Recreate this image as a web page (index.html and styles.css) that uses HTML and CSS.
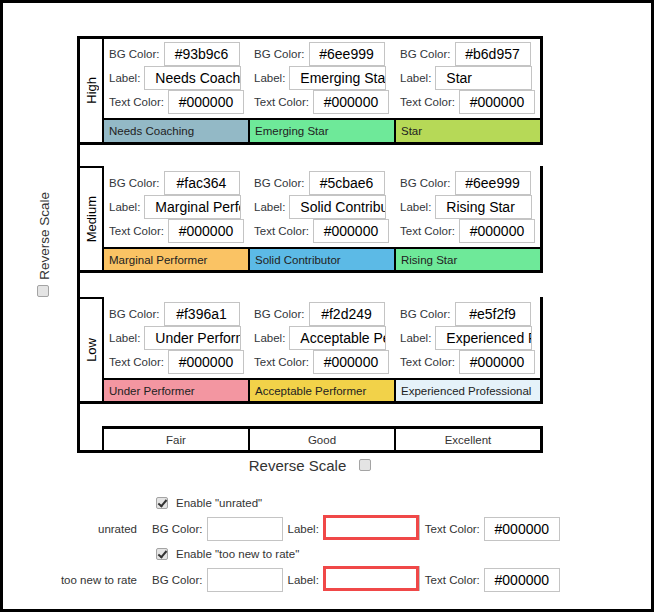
FILE: index.html
```html
<!DOCTYPE html>
<html lang="en">
<head>
  <meta charset="UTF-8">
  <meta name="viewport" content="width=device-width, initial-scale=1.0">
  <title>Rating Scale</title>
  <link rel="stylesheet" href="styles.css">
</head>
<body>
<div class="frame">
  <div class="board">
    <div class="side">
      <span class="side-label">Reverse Scale</span>
      <input type="checkbox" class="check">
    </div>

    <div class="matrix">
      <!-- High -->
      <div class="level">
        <div class="level-name"><span>High</span></div>
        <div class="level-body">
          <div class="cells">
            <div class="cell">
              <div class="field"><label>BG Color:</label><input class="txt color-input" value="#93b9c6"></div>
              <div class="field"><label>Label:</label><input class="txt label-input" value="Needs Coaching"></div>
              <div class="field"><label>Text Color:</label><input class="txt color-input" value="#000000"></div>
            </div>
            <div class="cell">
              <div class="field"><label>BG Color:</label><input class="txt color-input" value="#6ee999"></div>
              <div class="field"><label>Label:</label><input class="txt label-input" value="Emerging Star"></div>
              <div class="field"><label>Text Color:</label><input class="txt color-input" value="#000000"></div>
            </div>
            <div class="cell">
              <div class="field"><label>BG Color:</label><input class="txt color-input" value="#b6d957"></div>
              <div class="field"><label>Label:</label><input class="txt label-input" value="Star"></div>
              <div class="field"><label>Text Color:</label><input class="txt color-input" value="#000000"></div>
            </div>
          </div>
          <div class="bars bars-tall">
            <div class="bar bg-coaching">Needs Coaching</div>
            <div class="bar bg-emerging">Emerging Star</div>
            <div class="bar bg-star">Star</div>
          </div>
        </div>
      </div>

      <div class="gap-a"></div>

      <!-- Medium -->
      <div class="level level-next">
        <div class="level-name"><span>Medium</span></div>
        <div class="level-body">
          <div class="cells">
            <div class="cell">
              <div class="field"><label>BG Color:</label><input class="txt color-input" value="#fac364"></div>
              <div class="field"><label>Label:</label><input class="txt label-input" value="Marginal Performer"></div>
              <div class="field"><label>Text Color:</label><input class="txt color-input" value="#000000"></div>
            </div>
            <div class="cell">
              <div class="field"><label>BG Color:</label><input class="txt color-input" value="#5cbae6"></div>
              <div class="field"><label>Label:</label><input class="txt label-input" value="Solid Contributor"></div>
              <div class="field"><label>Text Color:</label><input class="txt color-input" value="#000000"></div>
            </div>
            <div class="cell">
              <div class="field"><label>BG Color:</label><input class="txt color-input" value="#6ee999"></div>
              <div class="field"><label>Label:</label><input class="txt label-input" value="Rising Star"></div>
              <div class="field"><label>Text Color:</label><input class="txt color-input" value="#000000"></div>
            </div>
          </div>
          <div class="bars">
            <div class="bar bg-marginal">Marginal Performer</div>
            <div class="bar bg-solid">Solid Contributor</div>
            <div class="bar bg-rising">Rising Star</div>
          </div>
        </div>
      </div>

      <div class="gap-b"></div>

      <!-- Low -->
      <div class="level level-next">
        <div class="level-name"><span>Low</span></div>
        <div class="level-body">
          <div class="cells">
            <div class="cell">
              <div class="field"><label>BG Color:</label><input class="txt color-input" value="#f396a1"></div>
              <div class="field"><label>Label:</label><input class="txt label-input" value="Under Performer"></div>
              <div class="field"><label>Text Color:</label><input class="txt color-input" value="#000000"></div>
            </div>
            <div class="cell">
              <div class="field"><label>BG Color:</label><input class="txt color-input" value="#f2d249"></div>
              <div class="field"><label>Label:</label><input class="txt label-input" value="Acceptable Performer"></div>
              <div class="field"><label>Text Color:</label><input class="txt color-input" value="#000000"></div>
            </div>
            <div class="cell">
              <div class="field"><label>BG Color:</label><input class="txt color-input" value="#e5f2f9"></div>
              <div class="field"><label>Label:</label><input class="txt label-input" value="Experienced Professional"></div>
              <div class="field"><label>Text Color:</label><input class="txt color-input" value="#000000"></div>
            </div>
          </div>
          <div class="bars">
            <div class="bar bg-under">Under Performer</div>
            <div class="bar bg-acceptable">Acceptable Performer</div>
            <div class="bar bg-experienced">Experienced Professional</div>
          </div>
        </div>
      </div>

      <div class="gap-c"></div>

      <!-- performance scale -->
      <div class="scale">
        <div>Fair</div>
        <div>Good</div>
        <div>Excellent</div>
      </div>
    </div>
  </div>

  <div class="reverse-line">
    <span>Reverse Scale</span>
    <input type="checkbox" class="check">
  </div>

  <div class="extras">
    <div></div>
    <div class="enable"><input type="checkbox" class="check" checked><span>Enable "unrated"</span></div>

    <div class="extra-name">unrated</div>
    <div class="extra-fields">
      <label>BG Color:</label><input class="txt color-input" value="">
      <label>Label:</label><input class="txt warn" value="">
      <label>Text Color:</label><input class="txt color-input" value="#000000">
    </div>

    <div></div>
    <div class="enable"><input type="checkbox" class="check" checked><span>Enable "too new to rate"</span></div>

    <div class="extra-name">too new to rate</div>
    <div class="extra-fields">
      <label>BG Color:</label><input class="txt color-input" value="">
      <label>Label:</label><input class="txt warn" value="">
      <label>Text Color:</label><input class="txt color-input" value="#000000">
    </div>
  </div>
</div>
</body>
</html>
```

FILE: styles.css
```css
body {
  margin: 0;
  background: #fff;
  color: #333;
  font-family: "Liberation Sans", Arial, sans-serif;
}

.frame {
  box-sizing: border-box;
  width: 654px;
  height: 612px;
  border: 3px solid #000;
  padding-top: 33px;
}

.board {
  display: flex;
}

/* inputs */
.txt {
  box-sizing: border-box;
  height: 24px;
  margin: 0;
  padding: 0;
  border: 1px solid #c4c4c4;
  border-radius: 0;
  background: #fff;
  color: #000;
  font: 14px "Liberation Sans", Arial, sans-serif;
  outline: none;
}

.color-input {
  width: 76px;
  text-align: center;
}

.label-input {
  width: 97px;
  padding-left: 10px;
}

.check {
  -webkit-appearance: none;
  appearance: none;
  box-sizing: border-box;
  position: relative;
  width: 12px;
  height: 12px;
  margin: 0;
  border: 1px solid #a4a4a4;
  border-radius: 2px;
  background: #e4e4e4;
}

.check:checked::after {
  content: "";
  position: absolute;
  left: 3px;
  top: 0;
  width: 3px;
  height: 7px;
  border: solid #333;
  border-width: 0 2px 2px 0;
  transform: rotate(40deg);
}

/* left "Reverse Scale" */
.side {
  box-sizing: border-box;
  width: 74px;
  padding-left: 8px;
  display: flex;
  flex-direction: column;
  align-items: center;
  justify-content: center;
}

.side-label {
  writing-mode: vertical-rl;
  transform: rotate(180deg);
  font-size: 13.5px;
}

.side .check {
  margin-top: 6px;
  margin-right: 2px;
}

/* matrix */
.matrix {
  box-sizing: border-box;
  width: 466px;
  border: 3px solid #000;
  border-right: none;
}

.level {
  display: flex;
  border-bottom: 3px solid #000;
}

.level-name {
  width: 22px;
  border-right: 2px solid #000;
  display: flex;
  align-items: center;
  justify-content: center;
}

.level-name span {
  writing-mode: vertical-rl;
  transform: rotate(180deg);
  font-size: 13px;
  color: #000;
}

.level-body {
  width: 436px;
  border-right: 3px solid #000;
}

.level-next .level-name {
  border-top: 2px solid #000;
}

.level-next .level-body {
  padding-top: 2px;
}

.cells {
  display: grid;
  grid-template-columns: repeat(3, 144px);
  column-gap: 2px;
}

.cell {
  padding: 3px 0 4px 4px;
  display: flex;
  flex-direction: column;
}

.cell:first-child {
  padding-left: 5px;
}

.field {
  display: flex;
  align-items: center;
  gap: 4px;
  height: 24px;
  font-size: 11.5px;
  color: #32363a;
  white-space: nowrap;
}

.bars {
  display: grid;
  grid-template-columns: repeat(3, 144px);
  column-gap: 2px;
  background: #000;
  border-top: 2px solid #000;
}

.bar {
  height: 21px;
  padding-left: 5px;
  display: flex;
  align-items: center;
  font-size: 11.5px;
  color: #222;
  white-space: nowrap;
  overflow: hidden;
}

.bars-tall .bar {
  height: 22px;
}

.bg-coaching { background: #93b9c6; }
.bg-emerging { background: #6ee999; }
.bg-star { background: #b6d957; }
.bg-marginal { background: #fac364; }
.bg-solid { background: #5cbae6; }
.bg-rising { background: #6ee999; }
.bg-under { background: #f396a1; }
.bg-acceptable { background: #f2d249; }
.bg-experienced { background: #e5f2f9; }

.gap-a { height: 21px; }
.gap-b { height: 24px; }
.gap-c { height: 22px; }

.scale {
  margin-left: 22px;
  border-top: 3px solid #000;
  border-left: 2px solid #000;
  border-right: 3px solid #000;
  display: grid;
  grid-template-columns: repeat(3, 144px);
  column-gap: 2px;
  background: #000;
}

.scale div {
  height: 21px;
  background: #fff;
  display: flex;
  align-items: center;
  justify-content: center;
  font-size: 11.5px;
}

/* under the matrix */
.reverse-line {
  margin-left: 74px;
  width: 466px;
  height: 24px;
  display: flex;
  align-items: center;
  justify-content: center;
  gap: 13px;
  font-size: 15px;
}

.extras {
  display: grid;
  grid-template-columns: 134px auto;
  column-gap: 15px;
  margin-top: 13px;
  font-size: 11.5px;
}

.extra-name {
  display: flex;
  align-items: center;
  justify-content: flex-end;
}

.enable {
  height: 26px;
  display: flex;
  align-items: center;
}

.enable .check {
  margin-left: 4px;
  margin-right: 8px;
}

.extra-fields {
  height: 25px;
  display: flex;
  align-items: center;
}

.extra-fields label {
  margin-right: 4px;
}

.extra-fields .txt {
  margin-right: 5px;
}

.extra-fields .warn {
  width: 96px;
  height: 25px;
  margin-top: -3px;
  margin-right: 6px;
  border: 3px solid #f04848;
  box-shadow: 1px 0 0 #c4c4c4;
}
```
